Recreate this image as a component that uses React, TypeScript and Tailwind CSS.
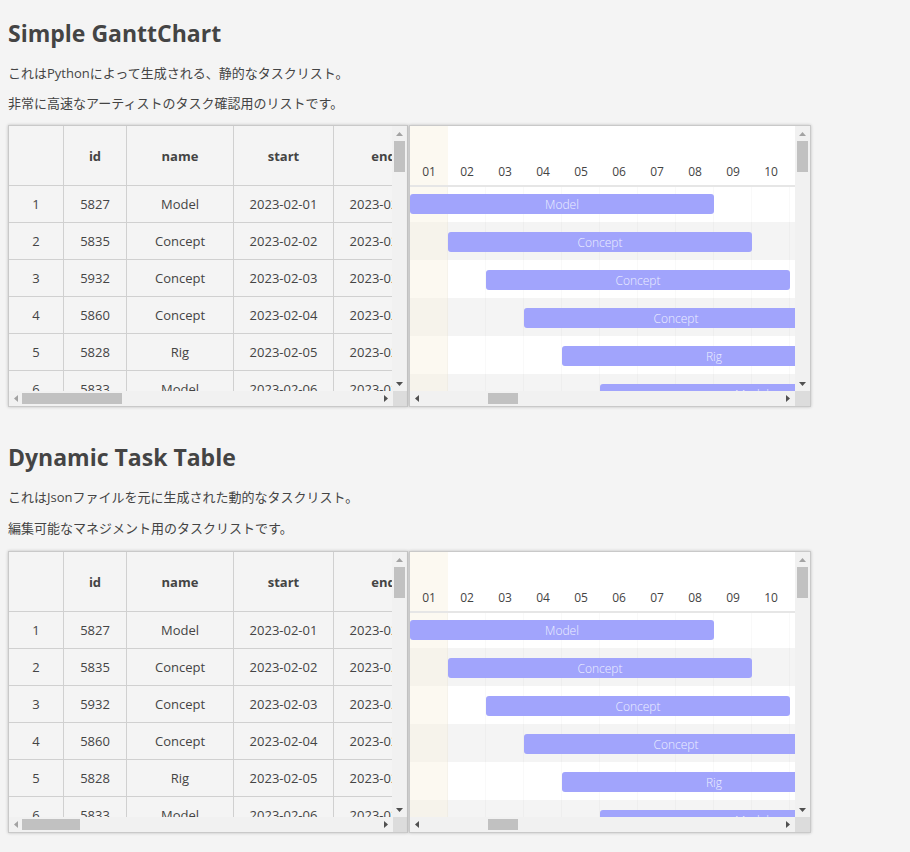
import React from 'react';

interface Task {
  no: number;
  id: number;
  name: string;
  start: string;
  end: string;
}

const tasks: Task[] = [
  { no: 1, id: 5827, name: 'Model', start: '2023-02-01', end: '2023-02-08' },
  { no: 2, id: 5835, name: 'Concept', start: '2023-02-02', end: '2023-02-09' },
  { no: 3, id: 5932, name: 'Concept', start: '2023-02-03', end: '2023-02-10' },
  { no: 4, id: 5860, name: 'Concept', start: '2023-02-04', end: '2023-02-11' },
  { no: 5, id: 5828, name: 'Rig', start: '2023-02-05', end: '2023-02-12' },
  { no: 6, id: 5833, name: 'Model', start: '2023-02-06', end: '2023-02-13' },
  { no: 7, id: 5841, name: 'Rig', start: '2023-02-07', end: '2023-02-14' },
];

const days = ['01', '02', '03', '04', '05', '06', '07', '08', '09', '10', '11'];

const DAY_W = 38;

function Tri({ dir, dark }: { dir: 'up' | 'down' | 'left' | 'right'; dark: boolean }) {
  const fill = dark ? '#505050' : '#a3a3a3';
  if (dir === 'up' || dir === 'down') {
    return (
      <svg width="7" height="4" viewBox="0 0 7 4">
        <polygon points={dir === 'up' ? '0,4 3.5,0 7,4' : '0,0 7,0 3.5,4'} fill={fill} />
      </svg>
    );
  }
  return (
    <svg width="4" height="7" viewBox="0 0 4 7">
      <polygon points={dir === 'left' ? '4,0 4,7 0,3.5' : '0,0 0,7 4,3.5'} fill={fill} />
    </svg>
  );
}

function VScroll() {
  return (
    <div className="flex w-[15px] flex-col bg-[#f1f1f1]">
      <div className="flex h-[15px] items-center justify-center">
        <Tri dir="up" dark={false} />
      </div>
      <div className="mx-[2px] h-[31px] bg-[#c1c1c1]" />
      <div className="flex-1" />
      <div className="flex h-[15px] items-center justify-center">
        <Tri dir="down" dark />
      </div>
    </div>
  );
}

function HScroll({ thumb, leftDark }: { thumb: string; leftDark: boolean }) {
  return (
    <div className="flex h-[15px] flex-1 bg-[#f1f1f1]">
      <div className="flex w-[13px] items-center justify-center">
        <Tri dir="left" dark={leftDark} />
      </div>
      <div className="flex flex-1 py-[2px]">
        <div className={`h-full bg-[#c1c1c1] ${thumb}`} />
      </div>
      <div className="flex w-[15px] items-center justify-center">
        <Tri dir="right" dark />
      </div>
    </div>
  );
}

const colW = ['w-[55px]', 'w-[63px]', 'w-[107px]', 'w-[100px]', 'w-[100px]'];

function TaskTable({ thumb }: { thumb: string }) {
  const head = ['', 'id', 'name', 'start', 'end'];
  return (
    <div className="flex w-[400px] flex-col border border-[#c9c9c9] bg-[#f4f4f4] shadow-[0_0_3px_rgba(0,0,0,0.22)]">
      <div className="flex h-[265px]">
        <div className="w-[384px] overflow-hidden">
          <div className="flex h-[60px] w-max">
            {head.map((h, i) => (
              <div
                key={i}
                className={`${colW[i]} flex shrink-0 items-center justify-center border-r border-b border-[#d0d0d0] pt-[2px] text-[13px] font-bold text-[#444]`}
              >
                {h}
              </div>
            ))}
          </div>
          {tasks.map((t) => (
            <div key={t.no} className="flex h-[37px] w-max">
              {[t.no, t.id, t.name, t.start, t.end].map((v, i) => (
                <div
                  key={i}
                  className={`${colW[i]} flex shrink-0 items-center justify-center whitespace-nowrap border-r border-b border-[#d0d0d0] pt-[2px] text-[13px] text-[#444]`}
                >
                  {v}
                </div>
              ))}
            </div>
          ))}
        </div>
        <VScroll />
      </div>
      <div className="flex">
        <HScroll thumb={thumb} leftDark={false} />
        <div className="h-[15px] w-[14px] bg-[#dcdcdc]" />
      </div>
    </div>
  );
}

function GanttRow({ task, index }: { task: Task; index: number }) {
  const odd = index % 2 === 1;
  const first = index === 0;
  return (
    <div className={`relative flex ${first ? 'h-[35px]' : 'h-[38px]'} ${odd ? 'bg-[#f4f4f4]' : 'bg-white'}`}>
      {days.map((d, i) => (
        <div
          key={d}
          className={`h-full w-[38px] shrink-0 border-r border-black/[0.025] ${
            i === 0 ? (odd ? 'bg-[#f6f3eb]' : 'bg-[#fcf9f1]') : ''
          }`}
        />
      ))}
      <div
        className={`absolute ${first ? 'top-[7px]' : 'top-[10px]'} flex h-[20px] w-[304px] items-center justify-center rounded-[3px] bg-[#a1a4fc] pt-[1px] text-[12px] font-light text-[#eceeff]`}
        style={{ left: index * DAY_W }}
      >
        {task.name}
      </div>
    </div>
  );
}

function Gantt() {
  return (
    <div className="flex w-[402px] flex-col border border-[#c9c9c9] bg-[#f4f4f4] shadow-[0_0_3px_rgba(0,0,0,0.22)]">
      <div className="flex h-[265px]">
        <div className="w-[385px] overflow-hidden">
          <div className="flex h-[61px] w-max border-b-2 border-[#e6e6e6] bg-white">
            {days.map((d, i) => (
              <div
                key={d}
                className={`flex w-[38px] shrink-0 items-end justify-center pb-[5px] text-[12px] leading-[17px] text-[#444] ${
                  i === 0 ? 'bg-[#fcf9f1]' : ''
                }`}
              >
                {d}
              </div>
            ))}
          </div>
          {tasks.map((t, i) => (
            <GanttRow key={t.no} task={t} index={i} />
          ))}
        </div>
        <VScroll />
      </div>
      <div className="flex">
        <HScroll thumb="ml-[65px] w-[30px]" leftDark />
        <div className="h-[15px] w-[15px] bg-[#dcdcdc]" />
      </div>
    </div>
  );
}

function Section({
  title,
  lines,
  thumb,
  first,
}: {
  title: string;
  lines: string[];
  thumb: string;
  first?: boolean;
}) {
  return (
    <section className={first ? 'pt-[17px]' : 'pt-[34px]'}>
      <h2 className="text-[23px] font-bold leading-[32px] text-[#444]">{title}</h2>
      <p className={`${first ? 'mt-[15px]' : 'mt-[15px]'} text-[13px] leading-[18px] text-[#444]`}>{lines[0]}</p>
      <p className={`${first ? 'mt-[12px]' : 'mt-[13px]'} text-[13px] leading-[18px] text-[#444]`}>{lines[1]}</p>
      <div className={`${first ? 'mt-[13px]' : 'mt-[14px]'} flex gap-[1px]`}>
        <TaskTable thumb={thumb} />
        <Gantt />
      </div>
    </section>
  );
}

export default function App() {
  return (
    <div className="min-h-screen bg-[#f4f4f4] px-2 pb-8 font-['Open_Sans','Noto_Sans_CJK_JP',sans-serif]">
      <Section
        first
        title="Simple GanttChart"
        lines={['これはPythonによって生成される、静的なタスクリスト。', '非常に高速なアーティストのタスク確認用のリストです。']}
        thumb="w-[100px]"
      />
      <Section
        title="Dynamic Task Table"
        lines={['これはJsonファイルを元に生成された動的なタスクリスト。', '編集可能なマネジメント用のタスクリストです。']}
        thumb="w-[58px]"
      />
    </div>
  );
}
